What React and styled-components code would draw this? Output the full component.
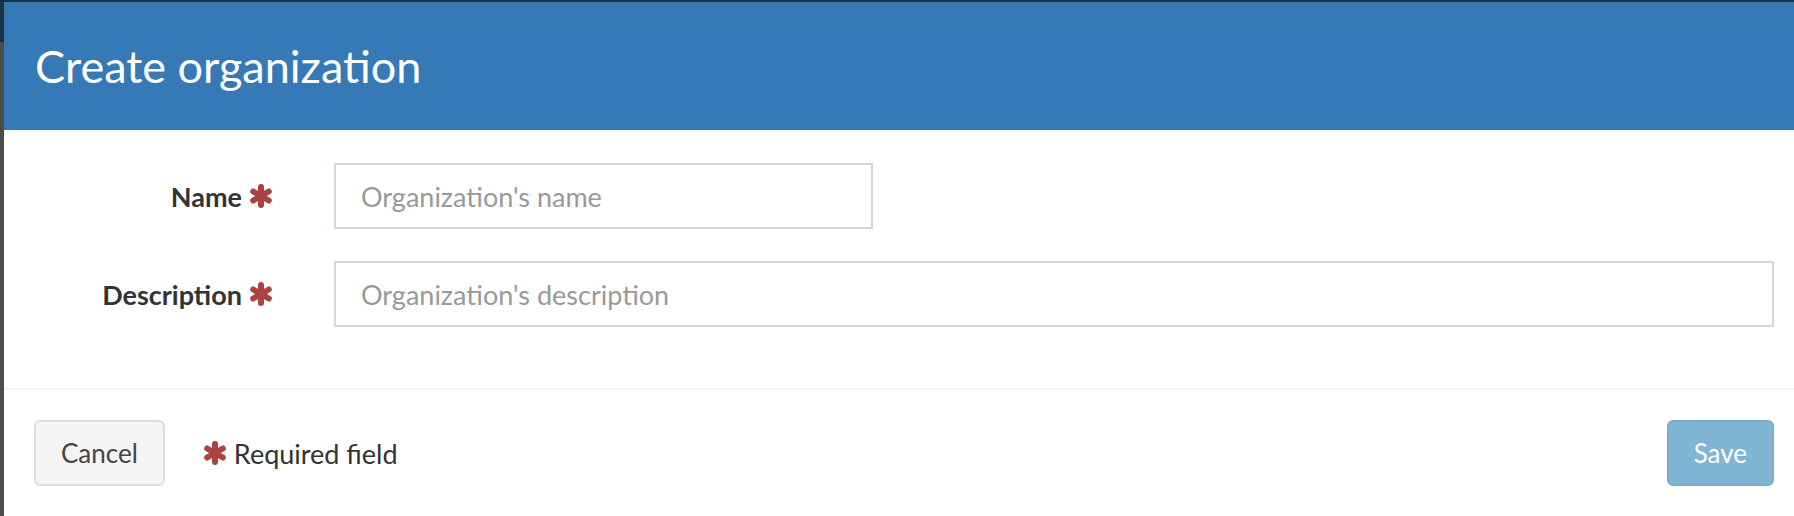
import React from 'react';
import styled, { createGlobalStyle } from 'styled-components';

const GlobalStyle = createGlobalStyle`
    html, body {
        margin: 0;
        padding: 0;
        overflow: hidden;
    }

    body {
        font-family: Lato, "Liberation Sans", sans-serif;
        background: linear-gradient(#173447 0, #173447 42px, #4b4b4b 42px);
        min-height: 100vh;
    }
`;

const Asterisk = ({ size = 24 }) => (
    <svg width={size} height={size} viewBox="0 0 24 24" aria-hidden="true">
        <g stroke="#a94442" strokeWidth="6" strokeLinecap="round">
            <line x1="12" y1="3" x2="12" y2="21" />
            <line x1="4.2" y1="7.5" x2="19.8" y2="16.5" />
            <line x1="4.2" y1="16.5" x2="19.8" y2="7.5" />
        </g>
    </svg>
);

export default function App() {
    return (
        <>
            <GlobalStyle />
            <StyledModal>

                <StyledHeader>
                    <StyledTitle>Create organization</StyledTitle>
                </StyledHeader>

                <StyledBody>
                    <StyledRow>
                        <StyledLabel htmlFor="org-name">
                            Name <Asterisk />
                        </StyledLabel>
                        <StyledInput id="org-name" $width="539px" placeholder="Organization's name" />
                    </StyledRow>

                    <StyledRow>
                        <StyledLabel htmlFor="org-description">
                            Description <Asterisk />
                        </StyledLabel>
                        <StyledInput id="org-description" placeholder="Organization's description" />
                    </StyledRow>
                </StyledBody>

                <StyledFooter>
                    <StyledButton>Cancel</StyledButton>
                    <StyledRequired>
                        <Asterisk /> Required field
                    </StyledRequired>
                    <StyledButton $primary disabled>Save</StyledButton>
                </StyledFooter>

            </StyledModal>
        </>
    );
}

const StyledModal = styled.div`
    width: 1800px;
    margin: 2px 0 0 4px;
    background: #fff;
    min-height: 600px;
`;

const StyledHeader = styled.div`
    height: 128px;
    padding: 0 31px;
    display: flex;
    align-items: center;
    background: #357ab7;
    border-bottom: 2px solid #f4f4f4;
`;

const StyledTitle = styled.h4`
    margin: 0;
    font-size: 45px;
    font-weight: 400;
    color: #fff;
`;

const StyledBody = styled.div`
    padding: 31px 30px 61px;
    display: grid;
    row-gap: 32px;
`;

const StyledRow = styled.div`
    display: grid;
    grid-template-columns: 239px 1fr;
    column-gap: 61px;
    align-items: center;
`;

const StyledLabel = styled.label`
    display: flex;
    justify-content: flex-end;
    align-items: center;
    gap: 7px;
    font-size: 27px;
    font-weight: 700;
    color: #333;
`;

const StyledInput = styled.input`
    box-sizing: border-box;
    width: ${props => props.$width || '100%'};
    height: 66px;
    padding: 0 25px;
    border: 2px solid #d2d6de;
    font-family: inherit;
    font-size: 27px;
    color: #555;
    outline: none;

    &::placeholder {
        color: #999;
    }
`;

const StyledFooter = styled.div`
    border-top: 2px solid #f4f4f4;
    padding: 30px;
    display: flex;
    align-items: center;
`;

const StyledButton = styled.button`
    box-sizing: border-box;
    height: 66px;
    padding: 0 25px;
    border-radius: 6px;
    font-family: inherit;
    font-size: 26px;
    border: 2px solid ${props => props.$primary ? '#7cacc7' : '#ddd'};
    background: ${props => props.$primary ? '#80b5d3' : '#f4f4f4'};
    color: ${props => props.$primary ? '#fff' : '#444'};
    margin-left: ${props => props.$primary ? 'auto' : '0'};
`;

const StyledRequired = styled.span`
    margin-left: 38px;
    display: flex;
    align-items: center;
    gap: 7px;
    font-size: 27px;
    color: #333;
`;
